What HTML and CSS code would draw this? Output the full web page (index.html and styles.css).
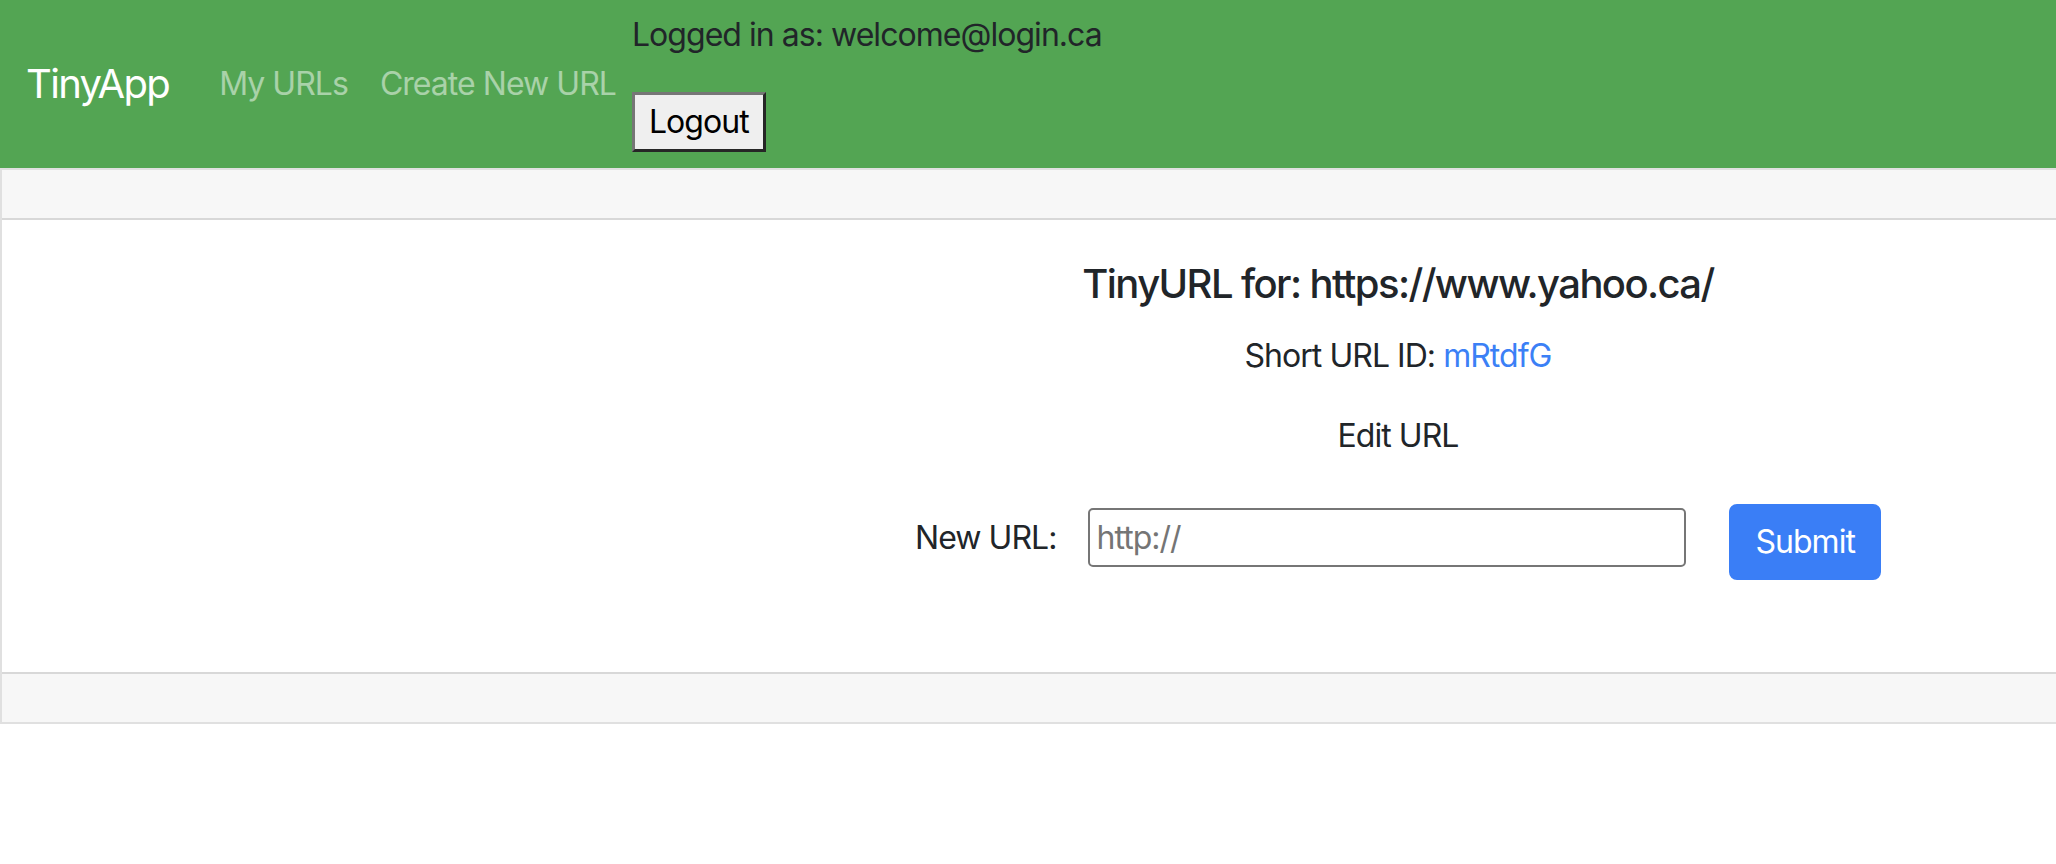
FILE: index.html
```html
<!DOCTYPE html>
<html lang="en">
<head>
<meta charset="utf-8">
<title>TinyApp</title>
<link rel="stylesheet" href="styles.css">
</head>
<body>
<nav class="navbar">
  <a class="brand" href="#">TinyApp</a>
  <div class="nav-links">
    <a class="nav-link" href="#">My URLs</a>
    <a class="nav-link" href="#">Create New URL</a>
  </div>
  <div class="user">
    <p class="user-text">Logged in as: welcome@login.ca</p>
    <form class="logout-form">
      <button class="logout" type="button">Logout</button>
    </form>
  </div>
</nav>
<main class="card">
  <div class="card-header"></div>
  <div class="card-body">
    <h5 class="title">TinyURL for: https://www.yahoo.ca/</h5>
    <p class="line">Short URL ID: <a class="link" href="#">mRtdfG</a></p>
    <p class="line line-last">Edit URL</p>
    <form class="edit-form">
      <label class="label" for="newurl">New URL:</label>
      <input class="url-input" id="newurl" type="text" placeholder="http://">
      <button class="submit" type="button">Submit</button>
    </form>
  </div>
  <div class="card-footer"></div>
</main>
</body>
</html>
```

FILE: styles.css
```css
* { box-sizing: border-box; }
html, body { margin: 0; padding: 0; }
body {
  font-family: Inter, "Noto Sans", sans-serif;
  font-size: 32px;
  line-height: 1.5;
  letter-spacing: -0.03em;
  color: #212529;
  background: #fff;
  overflow-x: hidden;
}
a { text-decoration: none; }

.navbar {
  display: flex;
  align-items: center;
  height: 168px;
  padding: 0 32px 0 26px;
  background: #53a553;
}
.brand {
  font-size: 40px;
  line-height: 1.5;
  letter-spacing: -0.042em;
  color: #fff;
  margin-right: 34px;
}
.nav-links { display: flex; }
.nav-link {
  color: rgba(255, 255, 255, 0.5);
  padding: 0 16px;
}
.user {
  display: flex;
  flex-direction: column;
  align-items: flex-start;
  align-self: flex-start;
  padding-top: 11px;
}
.user-text { margin: 0 0 33px; }
.logout-form { margin: 0; }
.logout {
  font-family: inherit;
  font-size: 32px;
  letter-spacing: -0.03em;
  line-height: 1;
  height: 60px;
  padding: 0 14px;
  color: #000;
  background: #efefef;
  border-style: solid;
  border-width: 3px;
  border-color: #767676 #262626 #262626 #767676;
  border-radius: 0;
}

.card {
  display: block;
  border-top: 2px solid #e0e0e0;
  border-left: 2px solid #e0e0e0;
  border-bottom: 2px solid #e0e0e0;
}
.card-header {
  height: 50px;
  background: #f7f7f7;
  border-bottom: 2px solid #d8d8d8;
}
.card-footer {
  height: 50px;
  background: #f7f7f7;
  border-top: 2px solid #d8d8d8;
}
.card-body {
  padding: 40px 40px 92px 778px;
  text-align: center;
}
.title {
  font-size: 40px;
  font-weight: 500;
  letter-spacing: -0.04em;
  line-height: 1.2;
  margin: 0 0 24px;
}
.line { margin: 0 0 32px; }
.line-last { margin-bottom: 44px; }
.link { color: #3b80f6; }

.edit-form {
  display: flex;
  justify-content: center;
  align-items: flex-start;
  height: 76px;
}
.label {
  margin-top: 10px;
  margin-right: 32px;
}
.url-input {
  width: 598px;
  height: 59px;
  margin-top: 4px;
  margin-right: 43px;
  font-family: inherit;
  font-size: 32px;
  letter-spacing: -0.03em;
  padding: 0 6px;
  border: 2px solid #767676;
  border-radius: 5px;
  color: #212529;
  background: #fff;
}
.url-input::placeholder { color: #757575; }
.submit {
  height: 76px;
  padding: 0 24px;
  font-family: inherit;
  font-size: 32px;
  letter-spacing: -0.03em;
  line-height: 1.5;
  color: #fff;
  background: #3a7ef6;
  border: 2px solid #3a7ef6;
  border-radius: 8px;
}
```
